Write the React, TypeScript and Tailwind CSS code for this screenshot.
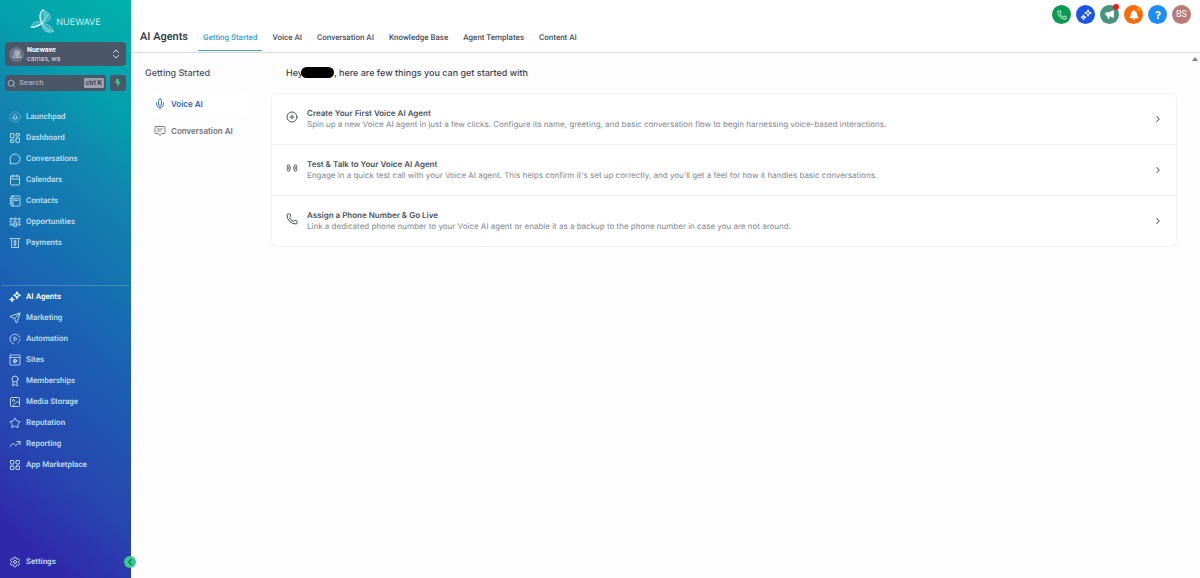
import type { ReactNode } from 'react'
import {
  Award,
  Calendar,
  ChevronLeft,
  ChevronRight,
  ChevronsUpDown,
  CirclePlus,
  Image,
  LayoutDashboard,
  LayoutGrid,
  MessageCircle,
  Mic,
  Phone,
  Search,
  Send,
  Settings,
  Star,
  TrendingUp,
} from 'lucide-react'
import { FaBell, FaBolt, FaQuestion } from 'react-icons/fa'
import { HiSpeakerphone } from 'react-icons/hi'

const Svg = ({ children, className = 'size-3' }: { children: ReactNode; className?: string }) => (
  <svg
    viewBox="0 0 24 24"
    fill="none"
    stroke="currentColor"
    strokeWidth="1.8"
    strokeLinecap="round"
    strokeLinejoin="round"
    className={className}
    aria-hidden="true"
  >
    {children}
  </svg>
)

const RocketIcon = () => (
  <Svg>
    <circle cx="12" cy="12" r="10.5" strokeWidth="1" opacity="0.7" />
    <path d="M9.5 15v-5c0-2 1-3.5 2.5-4.5 1.5 1 2.5 2.5 2.5 4.5v5zM9.5 11 7 13v2h2.5M14.5 11l2.5 2v2h-2.5M12 17v2" strokeWidth="1.3" />
  </Svg>
)

const ContactsIcon = () => (
  <Svg>
    <rect x="4" y="2" width="18" height="20" rx="2" />
    <path d="M8 2v20M2 7h4M2 12h4M2 17h4M12 7h6v4h-6z" />
  </Svg>
)

const OpportunitiesIcon = () => (
  <Svg>
    <circle cx="12" cy="6" r="2.5" />
    <circle cx="4" cy="6" r="2" />
    <circle cx="20" cy="6" r="2" />
    <circle cx="4" cy="17" r="2" />
    <circle cx="20" cy="17" r="2" />
    <path d="M9 20v-6a3 3 0 0 1 6 0v6zM1 11.5h5M18 11.5h5M12 14v4" />
  </Svg>
)

const PaymentsIcon = () => (
  <Svg>
    <path d="M2 3h20M5 3v18h14V3M15 8.5c-.6-.8-1.6-1-3-1-3.5 0-3.5 4 0 4s3.5 4.5 0 4.5c-1.5 0-2.5-.4-3-1.2M12 6v12" />
  </Svg>
)

const SparkIcon = () => (
  <Svg>
    <path d="M16 2l2 4.5 4.5 2-4.5 2-2 4.5-2-4.5-4.5-2 4.5-2z" strokeWidth="2.6" />
    <path d="M6 13v8M2 17h8" strokeWidth="2.6" />
  </Svg>
)

const AutomationIcon = () => (
  <Svg>
    <path d="M10 22A10 10 0 1 1 21.5 9" />
    <path d="M22 13a10 10 0 0 1-4 6.5" strokeDasharray="3 3" />
    <path d="M10 8.5v7l5.5-3.5z" />
  </Svg>
)

const SitesIcon = () => (
  <Svg>
    <rect x="2" y="2" width="20" height="20" rx="1" />
    <path d="M2 7h20M8.5 14h7M12 10.5v7" />
    <circle cx="12" cy="14" r="3.5" />
  </Svg>
)

const ChatIcon = () => (
  <Svg>
    <path d="M4 3h16a2 2 0 0 1 2 2v10a2 2 0 0 1-2 2h-5l-3 4-3-4H4a2 2 0 0 1-2-2V5a2 2 0 0 1 2-2zM7 8h10M7 12h6" />
  </Svg>
)

const BroadcastIcon = () => (
  <Svg>
    <path d="M4 5.500c-2.500 3.500-2.500 9.500 0 13M6.500 5.500c3 4 3 9 0 13M5.500 9.500v5M20 5.500c2.500 3.500 2.500 9.500 0 13M17.500 5.500c-3 4-3 9 0 13M18.500 9.500v5" />
  </Svg>
)

const icon = 'size-3 shrink-0'

const mainNav = [
  { label: 'Launchpad', icon: <RocketIcon /> },
  { label: 'Dashboard', icon: <LayoutDashboard className={icon} /> },
  { label: 'Conversations', icon: <MessageCircle className={icon} /> },
  { label: 'Calendars', icon: <Calendar className={icon} /> },
  { label: 'Contacts', icon: <ContactsIcon /> },
  { label: 'Opportunities', icon: <OpportunitiesIcon /> },
  { label: 'Payments', icon: <PaymentsIcon /> },
]

const toolsNav = [
  { label: 'AI Agents', icon: <SparkIcon />, active: true },
  { label: 'Marketing', icon: <Send className={icon} /> },
  { label: 'Automation', icon: <AutomationIcon /> },
  { label: 'Sites', icon: <SitesIcon /> },
  { label: 'Memberships', icon: <Award className={icon} /> },
  { label: 'Media Storage', icon: <Image className={icon} /> },
  { label: 'Reputation', icon: <Star className={icon} /> },
  { label: 'Reporting', icon: <TrendingUp className={icon} /> },
  { label: 'App Marketplace', icon: <LayoutGrid className={icon} /> },
]

const tabs = ['Getting Started', 'Voice AI', 'Conversation AI', 'Knowledge Base', 'Agent Templates', 'Content AI']

const steps = [
  {
    title: 'Create Your First Voice AI Agent',
    text: 'Spin up a new Voice AI agent in just a few clicks. Configure its name, greeting, and basic conversation flow to begin harnessing voice-based interactions.',
    icon: <CirclePlus className="size-3" />,
  },
  {
    title: 'Test & Talk to Your Voice AI Agent',
    text: "Engage in a quick test call with your Voice AI agent. This helps confirm it's set up correctly, and you'll get a feel for how it handles basic conversations.",
    icon: <BroadcastIcon />,
  },
  {
    title: 'Assign a Phone Number & Go Live',
    text: 'Link a dedicated phone number to your Voice AI agent or enable it as a backup to the phone number in case you are not around.',
    icon: <Phone className="size-3" />,
  },
]

function NavLink({ label, icon, active }: { label: string; icon: ReactNode; active?: boolean }) {
  return (
    <a
      href="#"
      className={`flex h-[21px] items-center gap-[5px] pl-[9px] text-[8px] font-semibold ${active ? 'text-white' : 'text-[#b9dcee]'}`}
    >
      {icon}
      {label}
    </a>
  )
}

function Logo() {
  return (
    <div className="flex h-[42px] items-center justify-center gap-0.5">
      <svg viewBox="0 0 24 24" className="size-6" aria-hidden="true">
        <g fill="#a8e6ea" fillOpacity="0.3" stroke="#c4f0f2" strokeWidth="0.4">
          <path d="M12 14C8 9 9 4 13 .5c6 3 8 6 7.5 9-2 3-5.500 3.500-8.500 4.500z" />
          <path d="M12 14C8 11.500 3 12 .7 18.500c3 .5 8-1 11.300-4.500z" />
          <path d="M12 14c-.5 4 1 8 5 9 3 .6 5 .3 6.500-.5C22.500 18 18 15 12 14z" />
        </g>
        <g fill="none" stroke="#e5fbfb" strokeWidth="0.5">
          <path d="M12 14c3-3 5-8 1-13.500M12 14c3-3 6-6 6-10M12 14c2 4 6 7 11.500 8.500M12 14c1 5 4 8 8 9" />
          <path d="M12 14C9 9 10 4 13 .5M12 14c-3 3-7 4-11.300 4.500" strokeWidth="1.1" />
        </g>
      </svg>
      <span className="pt-1 font-[Inter,sans-serif] text-[9px] text-[#c9f0f2]">NUEWAVE</span>
    </div>
  )
}

function Sidebar() {
  return (
    <aside className="relative flex w-[131px] shrink-0 flex-col bg-[linear-gradient(220deg,#00b2ac_0%,#059fac_18%,#1284b0_30%,#1474b0_42%,#1e5ab4_60%,#2844b0_78%,#3028aa_92%)] font-[Roboto,sans-serif]">
      <Logo />
      <button className="mx-[5px] flex h-6 items-center gap-[3px] rounded bg-[#4b5668] px-1 text-left">
        <span className="flex size-[15px] items-center justify-center rounded-full bg-[#6b7484] text-[#dde2e8]">
          <Svg className="size-[10px]">
            <circle cx="12" cy="9" r="6" />
            <circle cx="12" cy="9" r="2" />
            <path d="M7 14c-3 1-4 3-4 6h18c0-3-1-5-4-6M12 15v5" />
          </Svg>
        </span>
        <span className="flex-1 pt-0.5 text-[7px] leading-[9px]">
          <span className="block font-bold text-white">Nuewave</span>
          <span className="block text-[#d5dae0]">camas, wa</span>
        </span>
        <ChevronsUpDown className="size-3 text-[#e0e5ea]" />
      </button>
      <div className="mx-[5px] mt-[9px] flex gap-1">
        <label className="flex h-4 min-w-0 flex-1 items-center gap-[3px] rounded-[3px] bg-[#4b5668] px-[2px] text-[#c5cbd3]">
          <Search className="size-[9px] shrink-0" />
          <input
            aria-label="Search"
            placeholder="Search"
            className="min-w-0 flex-1 bg-transparent text-[8px] leading-4 outline-none placeholder:text-[#b8bfc9]"
          />
          <kbd className="rounded-[1px] bg-[#9aa2ae] px-[2px] font-[Roboto,sans-serif] text-[7px] leading-[10px] font-medium text-[#2b3442]">ctrl K</kbd>
        </label>
        <button aria-label="Quick actions" className="flex size-4 items-center justify-center rounded-[3px] bg-[#4b5668] text-[#37ca8f]">
          <FaBolt className="size-2" />
        </button>
      </div>
      <nav className="mt-[15px]">
        {mainNav.map((item) => (
          <NavLink key={item.label} {...item} />
        ))}
      </nav>
      <hr className="mx-0.5 mt-8 border-white/20" />
      <nav>
        {toolsNav.map((item) => (
          <NavLink key={item.label} {...item} />
        ))}
      </nav>
      <div className="mt-auto pb-1.5">
        <NavLink label="Settings" icon={<Settings className={icon} />} />
      </div>
      <button
        aria-label="Collapse sidebar"
        className="absolute -right-[5px] bottom-[10px] flex size-3 items-center justify-center rounded-full bg-[#37ca8f] text-[#176b55]"
      >
        <ChevronLeft className="size-[10px]" strokeWidth={3} />
      </button>
    </aside>
  )
}

const round = 'relative flex size-[19px] items-center justify-center rounded-full text-white'

function TopActions() {
  return (
    <div className="flex gap-[5px] pt-[5px] pr-[9px]">
      <button aria-label="Call" className={`${round} bg-[#0a9a52]`}>
        <Phone className="size-[10px]" />
      </button>
      <button aria-label="Ask AI" className={`${round} bg-[#1c55e5]`}>
        <Svg className="size-3">
          <path
            d="M16 2l1.8 4.2L22 8l-4.2 1.8L16 14l-1.8-4.2L10 8l4.2-1.8zM7 12l1.4 3.1 3.1 1.4-3.1 1.4L7 21l-1.4-3.1-3.1-1.4 3.1-1.4z"
            strokeWidth="2.2"
          />
        </Svg>
      </button>
      <button aria-label="Announcements" className={`${round} bg-[#47937c]`}>
        <HiSpeakerphone className="size-[11px]" />
        <span className="absolute -top-px right-0 size-1.5 rounded-full bg-[#f01818]" />
      </button>
      <button aria-label="Notifications" className={`${round} bg-[#f96a0c]`}>
        <FaBell className="size-[10px]" />
        <span className="absolute top-0.5 right-0.5 size-1 rounded-full bg-[#fb9d0a]" />
      </button>
      <button aria-label="Help" className={`${round} bg-[#1b8cf8]`}>
        <FaQuestion className="size-2" />
      </button>
      <button className={`${round} bg-[#b97b77] font-[Roboto,sans-serif] text-[9px]`}>BS</button>
    </div>
  )
}

function Header() {
  return (
    <header className="flex h-[53px] items-start justify-between border-b border-[#d9dadc] bg-white">
      <div className="flex h-full items-end pb-px pl-[9px] font-[Roboto,sans-serif]">
        <h1 className="pr-[10px] pb-[6px] text-[11px] leading-4 font-medium text-[#2d3540]">AI Agents</h1>
        <nav className="flex gap-[5px]">
          {tabs.map((tab, i) => (
            <a
              key={tab}
              href="#"
              className={`border-b px-[5px] pb-[6px] text-[8px] leading-3 font-medium whitespace-nowrap ${
                i === 0 ? 'border-[#45a5cf] text-[#3f9fcd]' : 'border-transparent text-[#4b525c]'
              }`}
            >
              {tab}
            </a>
          ))}
        </nav>
      </div>
      <TopActions />
    </header>
  )
}

export default function App() {
  return (
    <div className="flex min-h-screen bg-[#fdfdfd] [text-rendering:geometricPrecision]">
      <Sidebar />
      <div className="flex min-w-0 flex-1 flex-col">
        <Header />
        <main className="relative flex flex-1 pt-[15px] pr-[23px] pl-[14px] font-[Inter,sans-serif]">
          <div className="absolute top-1 right-[2px] h-0 w-0 border-x-3 border-b-4 border-x-transparent border-b-[#808080]" />
          <section className="w-[126px] shrink-0">
            <h2 className="text-[9px] leading-3 font-medium text-[#4a515b]">Getting Started</h2>
            <div className="mt-[14px] flex w-[103px] flex-col gap-[7px] text-[8px]">
              <button className="ml-2 flex h-5 items-center gap-[5px] rounded bg-white pl-px font-semibold whitespace-nowrap text-[#2a62c9]">
                <Mic className="size-3" strokeWidth={1.8} />
                Voice AI
              </button>
              <button className="ml-2 flex h-5 items-center gap-[5px] rounded pl-px font-semibold whitespace-nowrap text-[#6d747e]">
                <ChatIcon />
                Conversation AI
              </button>
            </div>
          </section>
          <section className="min-w-0 flex-1">
            <h2 className="flex items-start pl-[15px] text-[9px] leading-3 font-medium text-[#3d444e]">
              Hey
              <span className="-my-px -ml-0.5 h-[11px] w-[33px] rounded-full bg-black" />
              <span>, here are few things you can get started with</span>
            </h2>
            <ul className="mt-[13px] divide-y divide-[#f1f1f2] rounded-md border border-[#f1f1f2] bg-white">
              {steps.map((step) => (
                <li key={step.title}>
                  <a href="#" className="flex h-[50px] items-center gap-[9px] pr-[13px] pl-[14px] text-[#4b525c]">
                    <span className="-mt-1">{step.icon}</span>
                    <span className="min-w-0 flex-1">
                      <span className="block text-[8px] leading-[11px] font-semibold text-[#4b525c]">{step.title}</span>
                      <span className="block text-[8px] leading-[11px] text-[#80868e]">{step.text}</span>
                    </span>
                    <ChevronRight className="size-[10px]" strokeWidth={2.5} />
                  </a>
                </li>
              ))}
            </ul>
          </section>
        </main>
      </div>
    </div>
  )
}
